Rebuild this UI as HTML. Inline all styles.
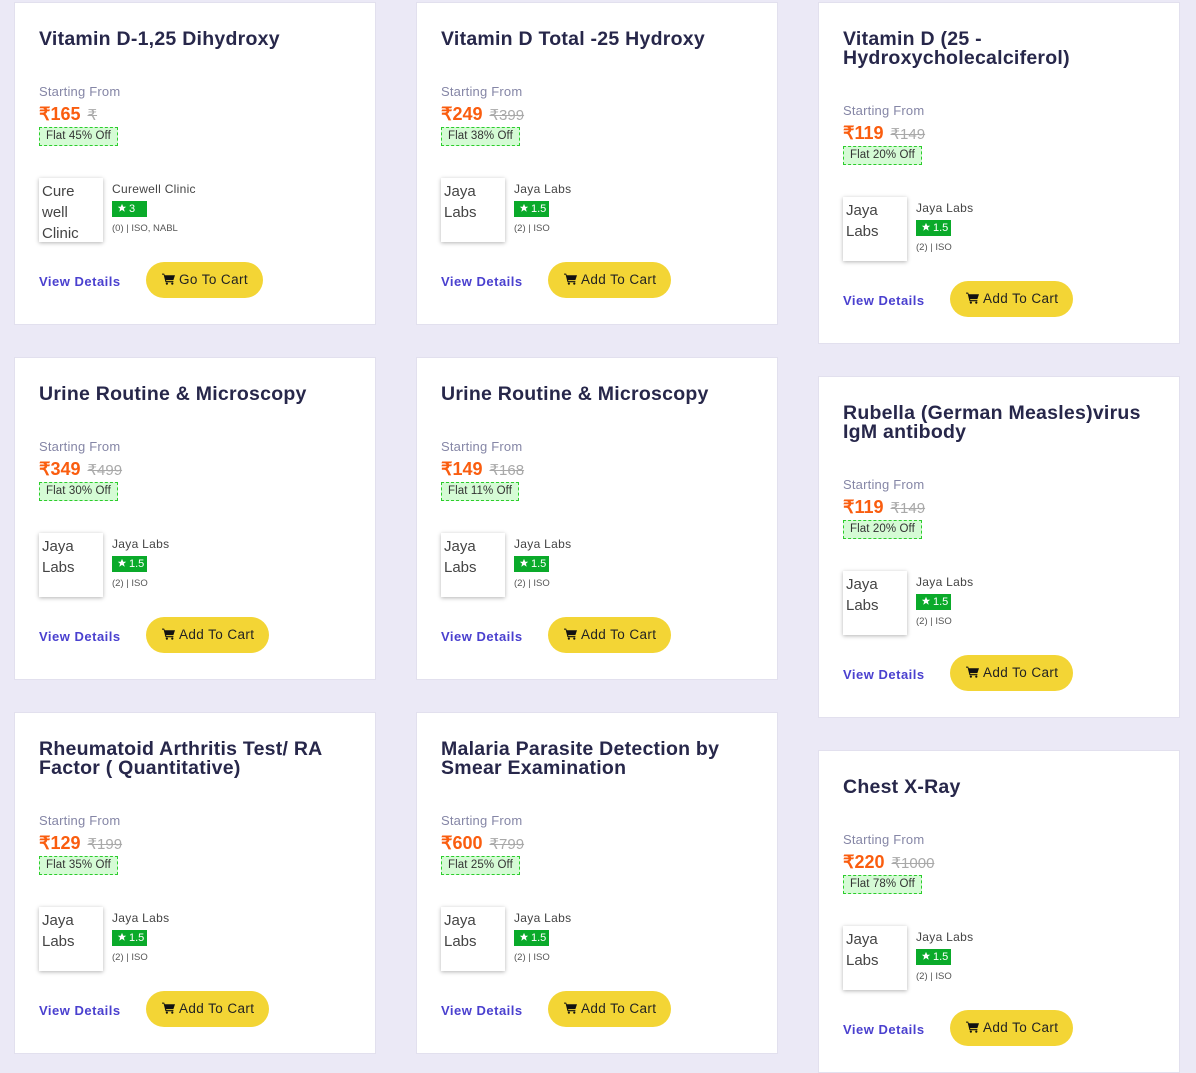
<!DOCTYPE html>
<html><head><meta charset="utf-8">
<style>
*{margin:0;padding:0;box-sizing:border-box}
body{width:1196px;height:893px;overflow:hidden;background:#ebe9f6;font-family:"Liberation Sans",sans-serif;position:relative}
.card{position:absolute;width:362px;background:#fff;border:1px solid #e2e0ee}
.card>*{position:absolute;left:24px}
.t{top:27px;font-size:19.5px;line-height:19px;font-weight:bold;color:#27274a;width:330px;letter-spacing:0.25px}
.sf{font-size:13px;color:#8586a6;line-height:14px;letter-spacing:0.2px}
.pr{font-size:18px;line-height:20px;font-weight:bold;color:#fa5d0f}
.pr s{font-weight:normal;color:#a9a9a9;font-size:15px;margin-left:2px}
.bd{font-size:11.5px;line-height:17px;height:19px;padding:0 6px;background:#d5fbd5;border:1px dashed #2ccd2c;color:#333;letter-spacing:0.1px}
.im{width:64px;height:64px;box-shadow:0 1px 4px rgba(0,0,0,.3);font-size:15px;line-height:21px;color:#444;padding:3px 3px;background:#fff}
.ln{left:97px;font-size:12px;color:#444;letter-spacing:0.3px}
.rt{left:97px;width:35px;height:16px;background:#0aaa2a;color:#fff;font-size:11px;line-height:16px;padding-left:5px}
.is{left:97px;font-size:9.5px;color:#555}
.vd{font-size:13px;font-weight:bold;color:#4a40cf;letter-spacing:0.5px}
.bt{left:131px;height:36px;border-radius:18px;background:#f3d535;font-size:13.5px;line-height:36px;color:#222;padding:0 15px 0 16px;letter-spacing:0.4px}
</style></head><body>

<script>
const cards=[
[14,2,["Vitamin D-1,25 Dihydroxy"],"₹165","₹","Flat 45% Off",["Cure","well","Clinic"],"Curewell Clinic","3","(0) | ISO, NABL","Go To Cart",false],
[416,2,["Vitamin D Total -25 Hydroxy"],"₹249","₹399","Flat 38% Off",["Jaya","Labs"],"Jaya Labs","1.5","(2) | ISO","Add To Cart",true],
[818,2,["Vitamin D (25 -","Hydroxycholecalciferol)"],"₹119","₹149","Flat 20% Off",["Jaya","Labs"],"Jaya Labs","1.5","(2) | ISO","Add To Cart",true],
[14,357,["Urine Routine & Microscopy"],"₹349","₹499","Flat 30% Off",["Jaya","Labs"],"Jaya Labs","1.5","(2) | ISO","Add To Cart",true],
[416,357,["Urine Routine & Microscopy"],"₹149","₹168","Flat 11% Off",["Jaya","Labs"],"Jaya Labs","1.5","(2) | ISO","Add To Cart",true],
[818,376,["Rubella (German Measles)virus","IgM antibody"],"₹119","₹149","Flat 20% Off",["Jaya","Labs"],"Jaya Labs","1.5","(2) | ISO","Add To Cart",true],
[14,712,["Rheumatoid Arthritis Test/ RA","Factor ( Quantitative)"],"₹129","₹199","Flat 35% Off",["Jaya","Labs"],"Jaya Labs","1.5","(2) | ISO","Add To Cart",true],
[416,712,["Malaria Parasite Detection by","Smear Examination"],"₹600","₹799","Flat 25% Off",["Jaya","Labs"],"Jaya Labs","1.5","(2) | ISO","Add To Cart",true],
[818,750,["Chest X-Ray"],"₹220","₹1000","Flat 78% Off",["Jaya","Labs"],"Jaya Labs","1.5","(2) | ISO","Add To Cart",true]
];
const star='<svg width="10" height="10" viewBox="0 0 24 24" style="vertical-align:-1px;margin-right:2px"><path fill="#fff" d="M12 2l3 7h7l-5.5 4.5 2 7.5L12 16.5 5.5 21l2-7.5L2 9h7z"/></svg>';
const cart='<svg width="13" height="12" viewBox="0 0 24 22" style="vertical-align:-1px;margin-right:4px"><path fill="#111" d="M0 1h4l1 3h19l-3 9H7.5l.6 2H21v2H6.5L3 3H0z"/><circle cx="9" cy="19.5" r="2" fill="#111"/><circle cx="19" cy="19.5" r="2" fill="#111"/></svg>';
let h='';
for(const c of cards){
 const s=(c[2].length-1)*19;
 h+=`<div class="card" style="left:${c[0]}px;top:${c[1]}px;height:${323+s}px">
<div class="t">${c[2].join('<br>')}</div>
<div class="sf" style="top:${82+s}px">Starting From</div>
<div class="pr" style="top:${101+s}px">${c[3]} <s>${c[4]}</s></div>
<div class="bd" style="top:${124+s}px">${c[5]}</div>
<div class="im" style="top:${175+s}px">${c[6].join('<br>')}</div>
<div class="ln" style="top:${179+s}px">${c[7]}</div>
<div class="rt" style="top:${198+s}px">${star}${c[8]}</div>
<div class="is" style="top:${220+s}px">${c[9]}</div>
<div class="vd" style="top:${271+s}px">View Details</div>
<div class="bt" style="top:${259+s}px">${cart}${c[10]}</div>
</div>`;
}
document.write(h);
</script>
</body></html>
